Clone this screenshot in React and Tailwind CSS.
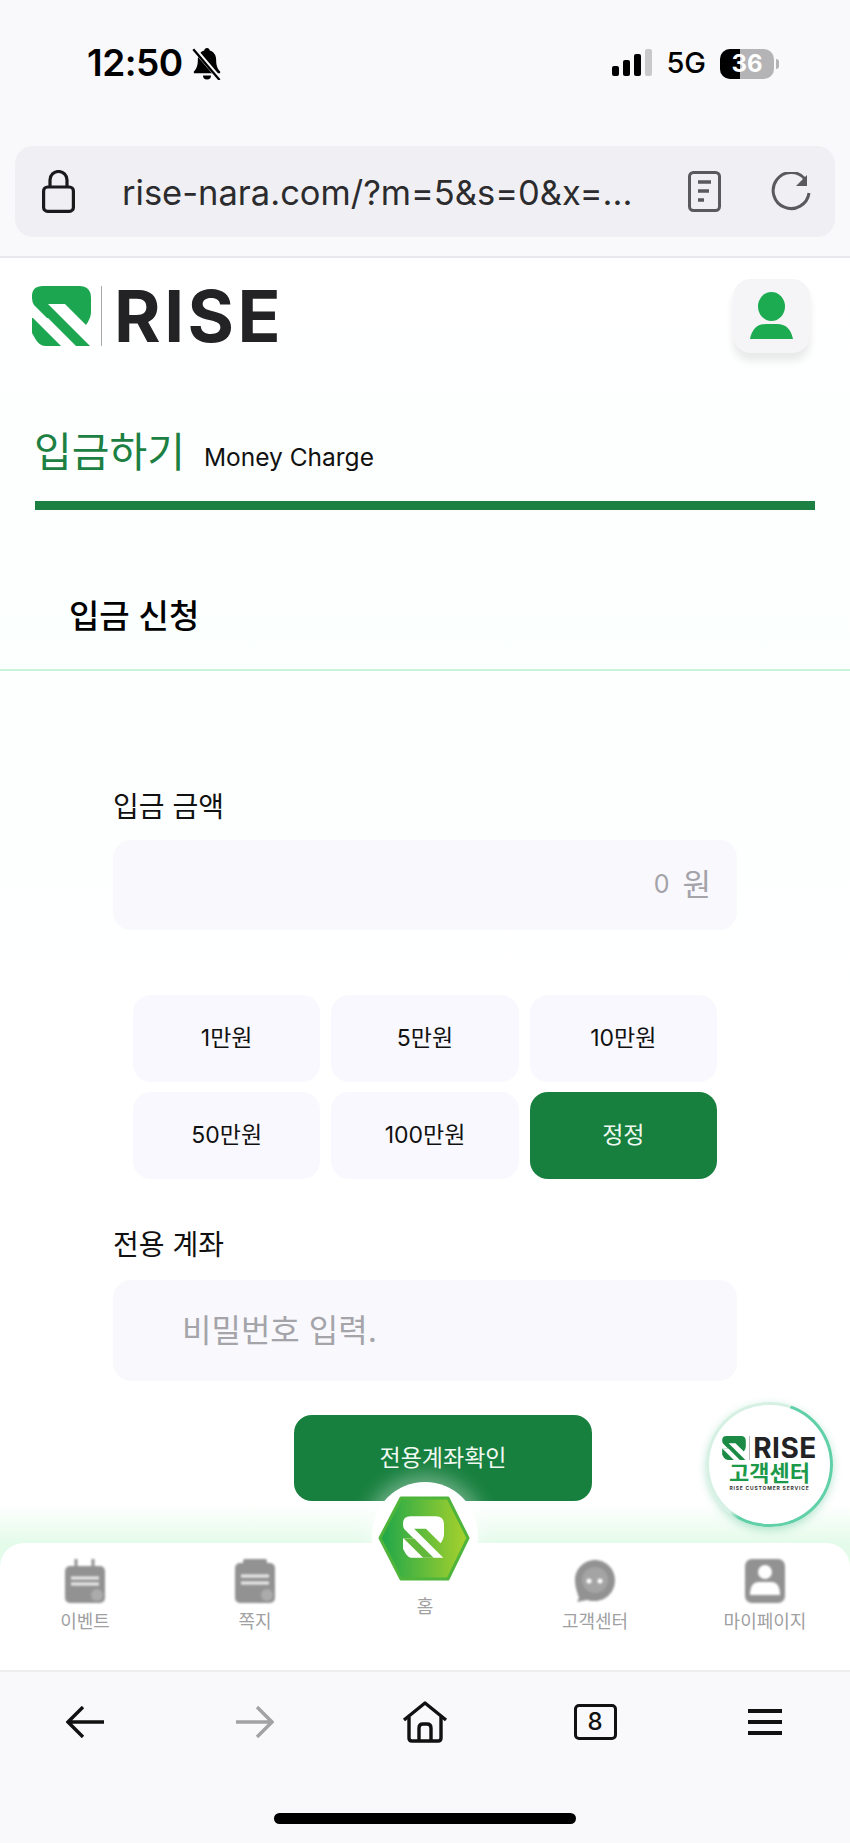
const KR = "font-['Inter','Noto_Sans_CJK_KR',sans-serif]";

function Mark({ className = "", color = "#1ba64f", stripe = "#ffffff" }) {
  return (
    <svg viewBox="0 0 59 60" className={className}>
      <path fill={color} d="M11 0H47Q59 0 59 12V26Q59 32 54 39L33 18H16L58 60H43L2 19Q0 16 0 12V10Q0 0 11 0Z" />
      <path fill={color} d="M0 32H15L43 60H14Q8 60 4 54L0 47Z" />
      <path fill={stripe} d="M1 32H16L44 60H29Z" />
    </svg>
  );
}

function Battery() {
  return (
    <div className="flex items-center ml-[14px]">
      <div className={`relative w-[54px] h-[30px] rounded-[10px] overflow-hidden bg-[#b4b4b6] flex items-center justify-center text-[24px] font-bold text-white ${KR}`}>
        <div className="absolute left-0 top-0 bottom-0 w-[20px] bg-black" />
        <span className="relative">36</span>
      </div>
      <div className="w-[3px] h-[10px] ml-[2px] rounded-r-full bg-[#b4b4b6]" />
    </div>
  );
}

function StatusBar() {
  return (
    <div className="h-[146px] flex justify-between pl-[72px] pr-[56px] pt-[48px]">
      <div className="flex items-start">
        <span className={`text-[37px] leading-[30px] font-semibold text-black tracking-[-0.5px] ${KR}`}>12:50</span>
        <svg viewBox="2 1 26 28" className="w-[30px] h-[32px] ml-[9px]">
          <path fill="#000" d="M15 1c-1.400 0-2.200 1-2.400 2.200C9 4.300 7 7.400 7 11c0 5-1 8-3.500 10.500V23h23v-1.500C24 19 23 16 23 11c0-3.600-2-6.700-5.600-7.800C17.200 2 16.400 1 15 1zM11.500 25a3.500 3.500 0 0 0 7 0z" />
          <path stroke="#f9f9fb" strokeWidth="4" d="M4 2L27 29" />
          <path stroke="#000" strokeWidth="2" d="M3 2L26 29" />
        </svg>
      </div>
      <div className="flex items-start pt-[1px]">
        <div className="flex items-end gap-[4px] h-[27px]">
          <div className="w-[7px] h-[10px] rounded-[2px] bg-black" />
          <div className="w-[7px] h-[16px] rounded-[2px] bg-black" />
          <div className="w-[7px] h-[22px] rounded-[2px] bg-black" />
          <div className="w-[7px] h-[27px] rounded-[2px] bg-[#c9c9cb]" />
        </div>
        <span className={`ml-[14px] text-[29px] leading-[28px] font-medium text-black ${KR}`}>5G</span>
        <Battery />
      </div>
    </div>
  );
}

function AddressBar() {
  return (
    <div className="h-[91px] rounded-[18px] bg-[#f0f0f4] flex items-center pl-[27px] pr-[23px]">
      <svg viewBox="0 0 33 43" className="w-[33px] h-[43px]" fill="none" stroke="#1a1a1c" strokeWidth="3.200">
        <rect x="1.600" y="17" width="29.800" height="24.400" rx="4" />
        <path d="M8 17V10a8.500 8.500 0 0 1 17 0v7" />
      </svg>
      <span className={`ml-[47px] pt-[3px] text-[34.5px] leading-[40px] text-[#2c2c2e] whitespace-nowrap flex-1 ${KR}`}>rise-nara.com/?m=5&amp;s=0&amp;x=...</span>
      <svg viewBox="0 0 33 41" className="w-[33px] h-[41px]" fill="none" stroke="#5a5a5e" strokeWidth="3">
        <rect x="1.500" y="1.500" width="30" height="38" rx="4" />
        <path d="M10 11H23M10 20H21M10 29H16" strokeWidth="3.400" />
      </svg>
      <svg viewBox="0 0 42 40" className="w-[42px] h-[40px] ml-[49px]" fill="none" stroke="#5a5a5e" strokeWidth="3">
        <path d="M35 7A18 18 0 1 0 39 21" />
        <path d="M37 3V14H26" fill="#5a5a5e" stroke="none" />
      </svg>
    </div>
  );
}

function TopChrome() {
  return (
    <div className="h-[258px] shrink-0 bg-[#f9f9fb] border-b-2 border-[#e9e9ed] px-[15px]">
      <StatusBar />
      <AddressBar />
    </div>
  );
}

function Header() {
  return (
    <div className="h-[74px] mt-[21px] shrink-0 flex items-center justify-between pl-[32px] pr-[40px]">
      <div className="flex items-center">
        <Mark className="w-[59px] h-[60px]" />
        <div className="w-[1px] h-[60px] bg-[#a8a8a8] ml-[10px]" />
        <span className="ml-[12px] text-[71px] leading-[60px] font-['Inter',sans-serif] font-bold tracking-[3.500px] text-[#232325]">RISE</span>
      </div>
      <div className="w-[77px] h-[74px] rounded-[18px] bg-[#f5f5f7] shadow-[0_8px_8px_rgba(0,0,0,0.09)] flex items-center justify-center">
        <svg viewBox="0 0 43 48" className="w-[43px] h-[48px]" fill="#1cab51">
          <ellipse cx="21.500" cy="14.500" rx="13.500" ry="14.500" />
          <path d="M0 47Q3 32 16 32H27Q40 32 43 47Z" />
        </svg>
      </div>
    </div>
  );
}

function Title() {
  return (
    <div className="px-[34px] pt-[76px] shrink-0">
      <div className="flex items-end h-[46px]">
        <span className={`text-[41px] leading-[46px] text-[#1b8042] ${KR}`}>입금하기</span>
        <span className={`ml-[19px] text-[24.5px] leading-[36px] text-[#111] ${KR}`}>Money Charge</span>
      </div>
      <div className="mt-[26px] ml-[1px] mr-[1px] h-[9px] bg-[#1b8042]" />
    </div>
  );
}

function AmountButton({ label, active }) {
  return (
    <button className={`h-[87px] rounded-[18px] flex items-center justify-center text-[23px] ${KR} ${active ? "bg-[#18803f] text-[#eef8f0]" : "bg-[#f8f8fe] text-[#111]"}`}>
      {label}
    </button>
  );
}

function Form() {
  return (
    <div className="pl-[113px] pr-[113px]">
      <div className={`text-[28px] leading-[32px] text-[#111] ${KR}`}>입금 금액</div>
      <div className={`mt-[17px] h-[90px] rounded-[18px] bg-[#f8f8fd] flex items-center justify-end pr-[26px] text-[#a3a3a9] ${KR}`}>
        <span className="text-[25px]">0</span>
        <span className="text-[31px] ml-[13px]">원</span>
      </div>
      <div className="mt-[65px] ml-[20px] mr-[20px] grid grid-cols-3 gap-x-[11px] gap-y-[10px]">
        <AmountButton label="1만원" />
        <AmountButton label="5만원" />
        <AmountButton label="10만원" />
        <AmountButton label="50만원" />
        <AmountButton label="100만원" />
        <AmountButton label="정정" active />
      </div>
      <div className={`mt-[50px] text-[28px] leading-[32px] text-[#111] ${KR}`}>전용 계좌</div>
      <div className={`mt-[19px] h-[101px] rounded-[18px] bg-[#f8f8fd] flex items-center pl-[69px] text-[32px] text-[#a4a4a9] ${KR}`}>비밀번호 입력.</div>
      <div className="flex mt-[34px] pl-[181px]">
        <button className={`w-[298px] h-[86px] rounded-[18px] bg-[#18803f] text-[23px] text-[#f0f8f2] ${KR}`}>전용계좌확인</button>
      </div>
    </div>
  );
}

function Main() {
  return (
    <div className="flex-1 bg-[linear-gradient(180deg,#ffffff_0%,#fbfffd_30%,#ffffff_62%)]">
      <Header />
      <Title />
      <div className="mt-[82px] h-[79px] pl-[69px] border-b-2 border-[#c9f2d6] shrink-0">
        <span className={`text-[33px] leading-[48px] font-medium text-black ${KR}`}>입금 신청</span>
      </div>
      <div className="pt-[120px]">
        <Form />
      </div>
    </div>
  );
}

const navIcons = {
  event: (
    <svg viewBox="0 0 40 44" className="w-[40px] h-[44px] blur-[0.8px]">
      <rect x="0" y="7" width="40" height="37" rx="5" fill="#929292" />
      <path d="M11 0V12M28 0V12" stroke="#929292" strokeWidth="3" />
      <path d="M6 19H34M6 25H34" stroke="#ececec" strokeWidth="3" />
      <circle cx="32" cy="36" r="6" fill="#ababab" />
    </svg>
  ),
  note: (
    <svg viewBox="0 0 40 44" className="w-[40px] h-[44px] blur-[0.8px]">
      <rect x="0" y="4" width="40" height="40" rx="5" fill="#929292" />
      <rect x="8" y="0" width="24" height="5" rx="2" fill="#929292" />
      <path d="M6 17H34M6 24H34" stroke="#ececec" strokeWidth="3" />
      <circle cx="32" cy="36" r="6" fill="#ababab" />
    </svg>
  ),
  chat: (
    <svg viewBox="0 0 40 44" className="w-[40px] h-[44px] blur-[0.8px]">
      <path d="M20 1C9 1 0 10 0 21C0 29 3 35 4 39L2 43L12 41C15 42 17 42 20 42C31 42 40 33 40 21C40 10 31 1 20 1Z" fill="#929292" />
      <circle cx="20" cy="21" r="13" fill="#a4a4a4" />
      <circle cx="14" cy="22" r="2.500" fill="#fff" />
      <circle cx="25" cy="22" r="2.500" fill="#fff" />
    </svg>
  ),
  my: (
    <svg viewBox="0 0 40 44" className="w-[40px] h-[44px] blur-[0.8px]">
      <rect x="0" y="0" width="40" height="44" rx="7" fill="#929292" />
      <circle cx="20" cy="13" r="7" fill="#fff" />
      <path d="M5 36Q5 23 14 23H26Q35 23 35 36Z" fill="#fff" />
    </svg>
  ),
};

function NavItem({ icon, label }) {
  return (
    <div className="flex flex-col items-center">
      {navIcons[icon]}
      <span className={`mt-[8px] text-[18px] leading-[22px] text-[#a0a0a2] ${KR}`}>{label}</span>
    </div>
  );
}

function HomeItem() {
  return (
    <div className="relative flex flex-col items-center">
      <div className="absolute top-[-77px] left-[32px] w-[106px] h-[106px] rounded-full bg-white shadow-[0_0_18px_8px_rgba(255,255,255,0.35)]" />
      <svg viewBox="-2 -2 92 88" className="absolute top-[-64px] left-[38px] w-[92px] h-[88px]">
        <defs>
          <linearGradient id="hex" x1="0" x2="1" y1="0" y2="0">
            <stop offset="0" stopColor="#1da64a" />
            <stop offset="1" stopColor="#a9d22c" />
          </linearGradient>
        </defs>
        <path d="M21 1H68L88 41L68 82H21L0 41Z" fill="url(#hex)" stroke="#4fb53a" strokeWidth="3" strokeLinejoin="round" />
        <svg x="23" y="19" width="41" height="42" viewBox="0 0 59 60">
          <path fill="#fff" d="M11 0H47Q59 0 59 12V26Q59 32 54 39L33 18H16L58 60H43L2 19Q0 16 0 12V10Q0 0 11 0Z" />
          <path fill="#fff" d="M0 32H15L43 60H14Q8 60 4 54L0 47Z" />
          <path fill="#62b83a" d="M1 32H16L44 60H29Z" />
        </svg>
      </svg>
      <span className={`relative mt-[37px] text-[18px] leading-[22px] text-[#a0a0a2] ${KR}`}>홈</span>
    </div>
  );
}

function BottomNav() {
  return (
    <div className="shrink-0 h-[165px] bg-[linear-gradient(180deg,#ffffff_0px,#e4fbea_38px)] pt-[38px]">
      <div className="h-[127px] rounded-t-[24px] bg-white grid grid-cols-5 pt-[16px]">
        <NavItem icon="event" label="이벤트" />
        <NavItem icon="note" label="쪽지" />
        <HomeItem />
        <NavItem icon="chat" label="고객센터" />
        <NavItem icon="my" label="마이페이지" />
      </div>
    </div>
  );
}

function BrowserBar() {
  return (
    <div className="shrink-0 h-[173px] bg-[#f9f8fb] border-t-2 border-[#eeeef0] flex flex-col">
      <div className="grid grid-cols-5 h-[76px] pt-[23px] justify-items-center items-center">
        <svg viewBox="0 0 38 32" className="w-[38px] h-[32px]" fill="none" stroke="#111" strokeWidth="3.400">
          <path d="M38 16H3M17 1L2 16L17 31" />
        </svg>
        <svg viewBox="0 0 38 32" className="w-[38px] h-[32px]" fill="none" stroke="#a2a2a4" strokeWidth="3.400">
          <path d="M0 16H35M21 1L36 16L21 31" />
        </svg>
        <svg viewBox="0 0 46 42" className="w-[46px] h-[42px]" fill="none" stroke="#111" strokeWidth="3.400" strokeLinejoin="round">
          <path d="M2 19L23 2L44 19" />
          <path d="M7 16V37Q7 40 10 40H36Q39 40 39 37V16" />
          <path d="M17 40V27Q17 23 21 23H25Q29 23 29 27V40" />
        </svg>
        <div className={`w-[43px] h-[36px] rounded-[5px] border-[3px] border-[#111] flex items-center justify-center text-[24px] leading-none font-medium text-[#111] ${KR}`}>8</div>
        <div className="flex flex-col gap-[7px] w-[34px]">
          <div className="h-[4px] bg-[#111]" />
          <div className="h-[4px] bg-[#111]" />
          <div className="h-[4px] bg-[#111]" />
        </div>
      </div>
      <div className="mt-[65px] mx-auto w-[302px] h-[11px] rounded-full bg-black" />
    </div>
  );
}

function SupportBadge() {
  return (
    <div className="absolute left-[706px] top-[1402px] w-[127px] h-[125px] rounded-full p-[3px] bg-[conic-gradient(from_20deg,#60d0a8_0deg,#60d0a8_190deg,#d6f1e4_200deg,#d6f1e4_360deg)] shadow-[0_3px_8px_rgba(60,180,130,0.35)]">
      <div className="w-full h-full rounded-full bg-white flex flex-col items-center pt-[31px]">
        <div className="flex items-center">
          <Mark className="w-[24px] h-[24px]" color="#1b8a45" />
          <div className="w-[1px] h-[24px] bg-[#bbb] ml-[3px]" />
          <span className="ml-[3px] text-[28px] leading-[24px] font-['Inter',sans-serif] font-bold tracking-[0.5px] text-[#232325]">RISE</span>
        </div>
        <span className={`text-[22px] leading-[24px] mt-[1px] font-bold text-[#1c9a4a] ${KR}`}>고객센터</span>
        <span className="text-[5px] leading-[6px] font-bold tracking-[0.8px] text-[#333] font-['Inter',sans-serif]">RISE CUSTOMER SERVICE</span>
      </div>
    </div>
  );
}

export default function App() {
  return (
    <div className="relative w-[850px] h-[1843px] overflow-hidden bg-white flex flex-col">
      <TopChrome />
      <Main />
      <BottomNav />
      <BrowserBar />
      <SupportBadge />
    </div>
  );
}
